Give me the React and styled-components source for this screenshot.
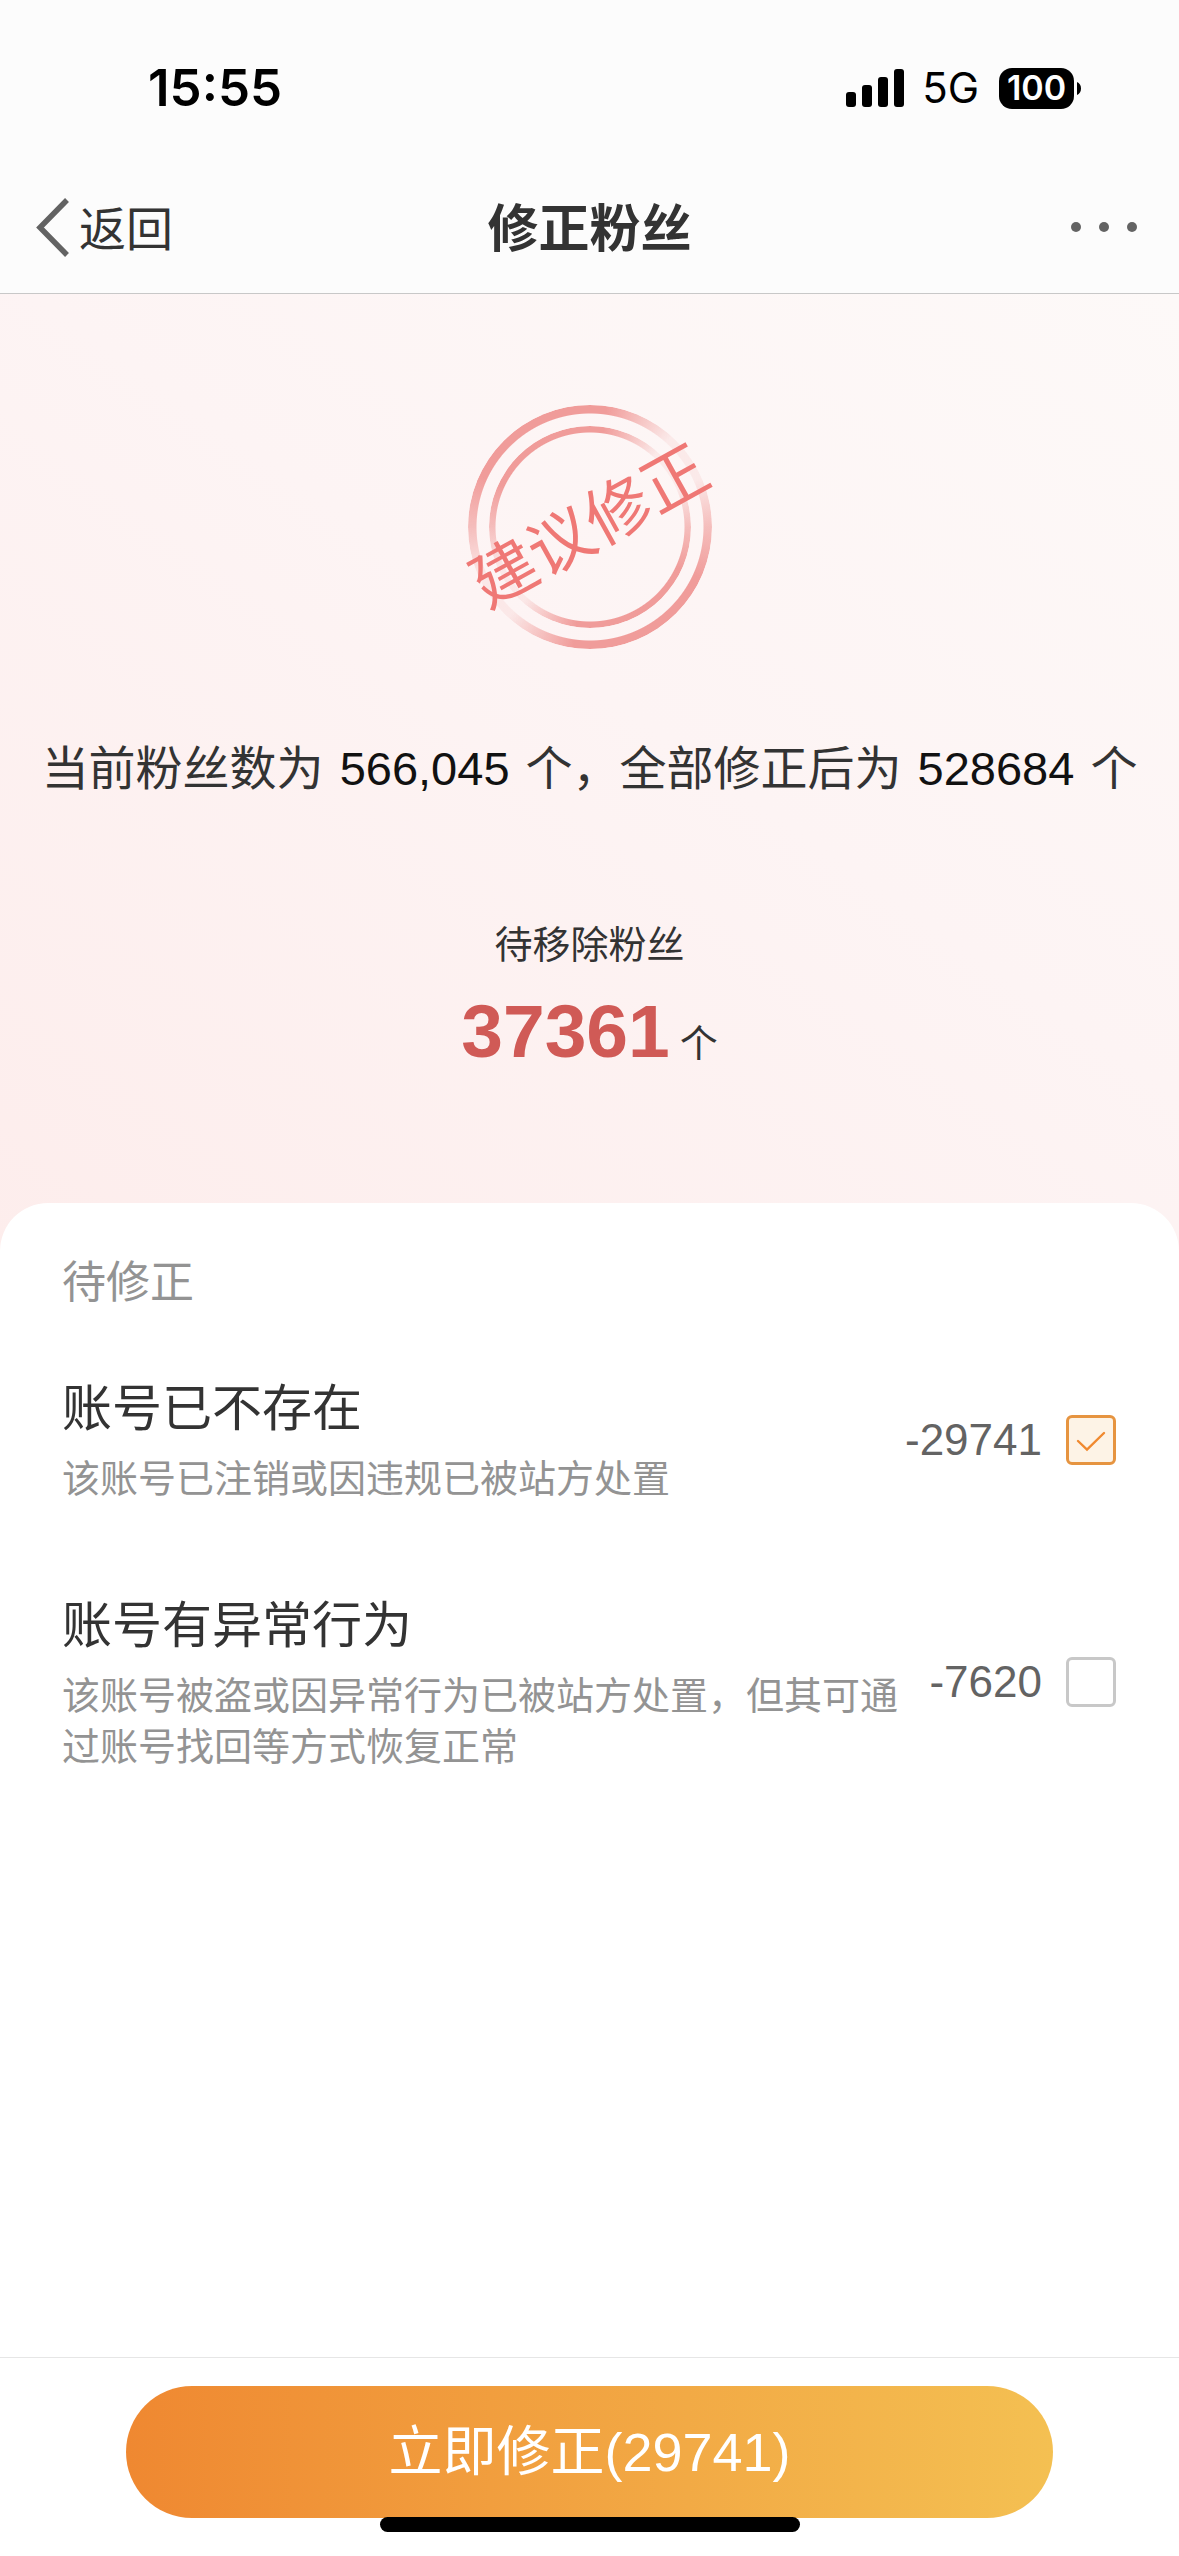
import React, { useState } from "react";
import styled, { createGlobalStyle } from "styled-components";

const GlobalStyle = createGlobalStyle`
  *, *::before, *::after { box-sizing: border-box; }
  body {
    margin: 0;
    background: #fff;
    color: #333;
    font-family: "Liberation Sans", "Noto Sans CJK SC", sans-serif;
  }
  h1, h2, h3, p, ul { margin: 0; padding: 0; font-weight: 400; }
  button { font: inherit; border: 0; background: none; padding: 0; cursor: pointer; }
`;

const Page = styled.div`
  min-height: 100vh;
  display: flex;
  flex-direction: column;
`;

const Top = styled.header`
  background: #fcfcfc;
  border-bottom: 1px solid #c8c8c8;
`;

const StatusBar = styled.div`
  display: flex;
  justify-content: space-between;
  align-items: center;
  height: 176px;
  padding: 0 98px 0 148px;
  color: #000;
  font-family: Inter, "Liberation Sans", sans-serif;
`;

const Clock = styled.span`
  font-size: 51px;
  font-weight: 600;
  line-height: 60px;
`;

const Indicators = styled.div`
  display: flex;
  align-items: center;
`;

const Signal = styled.svg`
  width: 58px;
  height: 38px;
`;

const Network = styled.span`
  margin: 0 20px 0 18px;
  font-size: 42px;
  line-height: 50px;
`;

const Battery = styled.span`
  display: flex;
  align-items: center;
  justify-content: center;
  width: 75px;
  height: 41px;
  border-radius: 13px;
  background: #000;
  color: #fff;
  font-size: 34px;
  font-weight: 600;
  line-height: 40px;
`;

const BatteryTip = styled.svg`
  width: 4px;
  height: 13px;
  margin-left: 3px;
`;

const NavBar = styled.nav`
  display: grid;
  grid-template-columns: 1fr auto 1fr;
  align-items: center;
  height: 117px;
  padding: 0 36px 9px;
`;

const BackButton = styled.button`
  justify-self: start;
  display: flex;
  align-items: center;
  gap: 10px;
  color: #333;
  font-size: 47px;
  line-height: 60px;

  svg { width: 33px; height: 66px; }
`;

const Title = styled.h1`
  font-size: 51px;
  font-weight: 600;
  line-height: 60px;
`;

const MoreButton = styled.button`
  justify-self: end;
  display: flex;

  svg { width: 72px; height: 66px; }
`;

const Hero = styled.section`
  display: flex;
  flex-direction: column;
  align-items: center;
  padding: 111px 24px 180px;
  background: linear-gradient(215deg, #fdf9f8 0%, #fdf4f4 45%, #fdedec 100%);
  text-align: center;
`;

const Stamp = styled.div`
  display: grid;
  grid-template-columns: 100%;
  place-items: center;
  width: 244px;
  height: 244px;

  > * { grid-area: 1 / 1; }
`;

const Ring = styled.span`
  width: ${(p) => p.$size}px;
  height: ${(p) => p.$size}px;
  border-radius: 50%;
  background: conic-gradient(
    #f09c9a 0deg, #f09c9a 8deg, #f09c9a22 42deg, #f09c9a22 66deg, #f09c9aa0 90deg,
    #f09c9a 115deg, #f09c9a 188deg, #f09c9a22 222deg, #f09c9a22 246deg, #f09c9aa0 270deg,
    #f09c9a 295deg, #f09c9a 360deg
  );
  mask: radial-gradient(
    closest-side,
    transparent calc(100% - ${(p) => p.$stroke + 1}px),
    #000 calc(100% - ${(p) => p.$stroke}px)
  );
`;

const StampText = styled.span`
  color: #ef7875;
  font-size: 65px;
  line-height: 80px;
  white-space: nowrap;
  transform: rotate(-29deg);
`;

const Summary = styled.p`
  margin-top: 90px;
  font-size: 47px;
  line-height: 60px;
`;

const Figure = styled.span`
  margin: 0 16px;
  color: #111;
`;

const HeroLabel = styled.h2`
  margin-top: 121px;
  font-size: 38px;
  line-height: 50px;
`;

const Total = styled.p`
  display: flex;
  align-items: baseline;
  gap: 10px;
  margin-top: 21px;
  font-size: 38px;
  line-height: 40px;

  strong {
    color: #d05a56;
    font-size: 75px;
    font-weight: 700;
    line-height: 80px;
  }
`;

const Panel = styled.main`
  flex: 1;
  margin-top: -48px;
  padding: 55px 63px 54px 62px;
  border-radius: 48px 48px 0 0;
  background: #fff;
`;

const PanelTitle = styled.h2`
  color: #939393;
  font-size: 44px;
  line-height: 50px;
`;

const List = styled.ul`
  display: flex;
  flex-direction: column;
  gap: 86px;
  margin-top: 66px;
  list-style: none;
`;

const Row = styled.label`
  display: flex;
  align-items: center;
  gap: 24px;
  cursor: pointer;
`;

const RowBody = styled.span`
  flex: 1;
  display: flex;
  flex-direction: column;
  gap: 10px;
`;

const RowTitle = styled.span`
  font-size: 50px;
  line-height: 70px;
`;

const RowNote = styled.span`
  color: #939393;
  font-size: 38px;
  line-height: 51px;
`;

const Count = styled.span`
  color: #636363;
  font-size: 44px;
  line-height: 50px;
`;

const Tick = styled.span`
  display: grid;
  width: 50px;
  height: 50px;

  > * { grid-area: 1 / 1; }

  input {
    appearance: none;
    width: 50px;
    height: 50px;
    margin: 0;
    border: 3px solid #c8c8c8;
    border-radius: 6px;
    background: #fff;
    cursor: pointer;
  }

  input:checked { border-color: #e69440; background: #fdf3e6; }

  svg { display: none; pointer-events: none; z-index: 1; }
  input:checked + svg { display: block; }
`;

const Footer = styled.footer`
  position: relative;
  padding: 28px 126px 38px;
  border-top: 1px solid #e6e6e6;
`;

const SubmitButton = styled.button`
  display: block;
  width: 100%;
  height: 132px;
  border-radius: 66px;
  background: linear-gradient(90deg, #ef8831, #f4c052);
  color: #fff;
  font-size: 54px;
  line-height: 70px;
`;

const HomeIndicator = styled.span`
  position: absolute;
  left: 50%;
  bottom: 24px;
  width: 420px;
  height: 15px;
  border-radius: 8px;
  background: #000;
  transform: translateX(-50%);
`;

const items = [
  { id: "gone", title: "账号已不存在", note: "该账号已注销或因违规已被站方处置", count: 29741 },
  {
    id: "abnormal",
    title: "账号有异常行为",
    note: "该账号被盗或因异常行为已被站方处置，但其可通过账号找回等方式恢复正常",
    count: 7620,
  },
];

function CheckRow({ item, checked, onToggle }) {
  return (
    <Row htmlFor={item.id}>
      <RowBody>
        <RowTitle>{item.title}</RowTitle>
        <RowNote>{item.note}</RowNote>
      </RowBody>
      <Count>{`-${item.count}`}</Count>
      <Tick>
        <input id={item.id} type="checkbox" checked={checked} onChange={onToggle} />
        <svg viewBox="0 0 50 50" fill="none" stroke="#f0892f" strokeWidth="2.4" strokeLinecap="round">
          <path d="M12 26l9 8.5L38 18" />
        </svg>
      </Tick>
    </Row>
  );
}

export default function App() {
  const [selected, setSelected] = useState({ gone: true, abnormal: false });
  const total = items.reduce((sum, i) => sum + (selected[i.id] ? i.count : 0), 0);

  return (
    <Page>
      <GlobalStyle />
      <Top>
        <StatusBar>
          <Clock>15:55</Clock>
          <Indicators>
            <Signal viewBox="0 0 58 38" aria-hidden="true">
              <rect x="0" y="23" width="10" height="15" rx="3" />
              <rect x="16" y="16" width="10" height="22" rx="3" />
              <rect x="32" y="8" width="10" height="30" rx="3" />
              <rect x="48" y="0" width="10" height="38" rx="3" />
            </Signal>
            <Network>5G</Network>
            <Battery>100</Battery>
            <BatteryTip viewBox="0 0 4 13" aria-hidden="true">
              <path d="M0 0c2.500 1 4 3.500 4 6.500S2.500 12 0 13z" />
            </BatteryTip>
          </Indicators>
        </StatusBar>
        <NavBar>
          <BackButton type="button">
            <svg viewBox="0 0 33 66" fill="none" stroke="#636363" strokeWidth="5.500" aria-hidden="true">
              <path d="M31 3L4 30.500L31 58" />
            </svg>
            返回
          </BackButton>
          <Title>修正粉丝</Title>
          <MoreButton type="button" aria-label="更多">
            <svg viewBox="0 0 72 66" fill="#636363">
              <circle cx="5" cy="30" r="5" />
              <circle cx="33" cy="30" r="5" />
              <circle cx="61" cy="30" r="5" />
            </svg>
          </MoreButton>
        </NavBar>
      </Top>

      <Hero>
        <Stamp>
          <Ring $size={244} $stroke={8} />
          <Ring $size={202} $stroke={6} />
          <StampText>建议修正</StampText>
        </Stamp>
        <Summary>
          当前粉丝数为<Figure>566,045</Figure>个，全部修正后为<Figure>528684</Figure>个
        </Summary>
        <HeroLabel>待移除粉丝</HeroLabel>
        <Total>
          <strong>37361</strong>
          <span>个</span>
        </Total>
      </Hero>

      <Panel>
        <PanelTitle>待修正</PanelTitle>
        <List>
          {items.map((item) => (
            <li key={item.id}>
              <CheckRow
                item={item}
                checked={selected[item.id]}
                onToggle={() => setSelected((s) => ({ ...s, [item.id]: !s[item.id] }))}
              />
            </li>
          ))}
        </List>
      </Panel>

      <Footer>
        <SubmitButton type="button">{`立即修正(${total})`}</SubmitButton>
        <HomeIndicator />
      </Footer>
    </Page>
  );
}
